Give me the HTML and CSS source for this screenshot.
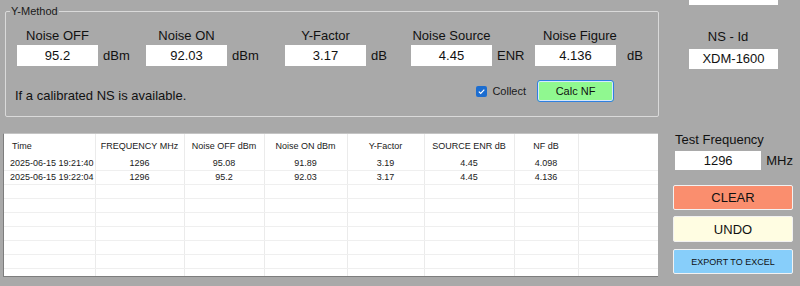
FILE: index.html
```html
<!DOCTYPE html>
<html lang="en">
<head>
  <meta charset="UTF-8" />
  <title>Noise Figure - Y-Method</title>
  <link rel="stylesheet" href="styles.css">
</head>
<body>
  <div class="window">
    <div class="top">
      <fieldset class="ymethod">
        <legend>Y-Method</legend>
        <div class="fields">
          <div class="field">
            <div class="field-col">
              <span class="field-label">Noise OFF</span>
              <div class="box">95.2</div>
            </div>
            <span class="unit">dBm</span>
          </div>
          <div class="field">
            <div class="field-col">
              <span class="field-label">Noise ON</span>
              <div class="box">92.03</div>
            </div>
            <span class="unit">dBm</span>
          </div>
          <div class="field">
            <div class="field-col">
              <span class="field-label">Y-Factor</span>
              <div class="box">3.17</div>
            </div>
            <span class="unit">dB</span>
          </div>
          <div class="field">
            <div class="field-col">
              <span class="field-label">Noise Source</span>
              <div class="box">4.45</div>
            </div>
            <span class="unit">ENR</span>
          </div>
          <div class="field field-nf">
            <div class="field-col">
              <span class="field-label">Noise Figure</span>
              <div class="box">4.136</div>
            </div>
            <span class="unit unit-wide">dB</span>
          </div>
        </div>
        <div class="actions">
          <span class="hint">If a calibrated NS is available.</span>
          <label class="collect">
            <span class="check">
              <svg width="11" height="11" viewBox="0 0 11 11"><path d="M2.8 5.6 L4.7 7.4 L8.3 3.6" fill="none" stroke="#fff" stroke-width="1.2"/></svg>
            </span>
            Collect
          </label>
          <button class="calc">Calc NF</button>
        </div>
      </fieldset>

      <div class="side-top">
        <div class="box name-box">Anritsu 2004</div>
        <div class="ns-label">NS - Id</div>
        <div class="box ns-box">XDM-1600</div>
      </div>
    </div>

    <div class="bottom">
      <div class="grid-wrap">
        <table class="grid">
          <colgroup>
            <col style="width:91px"><col style="width:89px"><col style="width:80px"><col style="width:83px">
            <col style="width:77px"><col style="width:90px"><col style="width:64px"><col>
          </colgroup>
          <thead>
            <tr>
              <th class="left">Time</th>
              <th>FREQUENCY MHz</th>
              <th>Noise OFF dBm</th>
              <th>Noise ON dBm</th>
              <th>Y-Factor</th>
              <th>SOURCE ENR dB</th>
              <th>NF dB</th>
              <th class="last"></th>
            </tr>
          </thead>
          <tbody>
            <tr><td class="left">2025-06-15 19:21:40</td><td>1296</td><td>95.08</td><td>91.89</td><td>3.19</td><td>4.45</td><td>4.098</td><td class="last"></td></tr>
            <tr><td class="left">2025-06-15 19:22:04</td><td>1296</td><td>95.2</td><td>92.03</td><td>3.17</td><td>4.45</td><td>4.136</td><td class="last"></td></tr>
            <tr><td></td><td></td><td></td><td></td><td></td><td></td><td></td><td class="last"></td></tr>
            <tr><td></td><td></td><td></td><td></td><td></td><td></td><td></td><td class="last"></td></tr>
            <tr><td></td><td></td><td></td><td></td><td></td><td></td><td></td><td class="last"></td></tr>
            <tr><td></td><td></td><td></td><td></td><td></td><td></td><td></td><td class="last"></td></tr>
            <tr><td></td><td></td><td></td><td></td><td></td><td></td><td></td><td class="last"></td></tr>
            <tr><td></td><td></td><td></td><td></td><td></td><td></td><td></td><td class="last"></td></tr>
            <tr><td></td><td></td><td></td><td></td><td></td><td></td><td></td><td class="last"></td></tr>
          </tbody>
        </table>
      </div>

      <div class="side-bottom">
        <div class="freq-label">Test Frequency</div>
        <div class="freq-row">
          <div class="box freq-box">1296</div>
          <span class="unit">MHz</span>
        </div>
        <button class="btn btn-clear">CLEAR</button>
        <button class="btn btn-undo">UNDO</button>
        <button class="btn btn-export">EXPORT TO EXCEL</button>
      </div>
    </div>
  </div>
</body>
</html>
```

FILE: styles.css
```css
* {
  margin: 0;
  padding: 0;
  box-sizing: border-box;
}

body {
  background: #a9a9a9;
  font-family: "Liberation Sans", Arial, sans-serif;
  color: #111;
}

.window {
  width: 800px;
  height: 286px;
  overflow: hidden;
}

/* top area: group box + NS id */
.top {
  display: flex;
  align-items: flex-start;
  height: 133px;
  padding: 4px 0 0 5px;
}

.ymethod {
  width: 654px;
  border: 1px solid #dadada;
  border-radius: 2px;
  padding: 10px 0 14px 0;
}

.ymethod legend {
  margin-left: 4px;
  padding: 0 1px;
  font-size: 11px;
  line-height: 14px;
  color: #1a1a1a;
}

.fields {
  display: grid;
  grid-template-columns: 129px 139px 126px 124px 1fr;
  margin-left: 11px;
}

.field {
  display: flex;
  align-items: flex-end;
}

.field-col {
  display: flex;
  flex-direction: column;
  width: 81px;
}

.field-label {
  font-size: 13px;
  line-height: 15px;
  text-align: center;
  margin-bottom: 2px;
  white-space: nowrap;
}

.field-nf {
  margin-top: -1px;
}

.field-nf .field-label {
  margin-left: 8px;
}

.box {
  background: #fff;
  font-size: 13px;
  text-align: center;
  color: #111;
  white-space: nowrap;
}

.field-col .box {
  height: 21px;
  line-height: 21px;
}

.unit {
  font-size: 13px;
  line-height: 21px;
  margin-left: 5px;
}

.unit-wide {
  margin-left: 11px;
}

.actions {
  display: flex;
  align-items: center;
  margin-top: 14px;
  height: 22px;
}

.hint {
  font-size: 13px;
  margin: 8px 0 0 9px;
}

.collect {
  display: flex;
  align-items: center;
  margin-left: auto;
  font-size: 11px;
  color: #1a1a1a;
}

.check {
  width: 11px;
  height: 11px;
  border-radius: 2px;
  background: #1c6dd0;
  margin-right: 5px;
  display: flex;
}

.calc {
  width: 77px;
  height: 22px;
  margin: 0 44px 0 11px;
  background: #90f890;
  border: 1px solid #2f80e0;
  border-radius: 3px;
  box-shadow: inset 0 0 0 1px #d6e8ff;
  font-family: "Liberation Sans", Arial, sans-serif;
  font-size: 11px;
  color: #111;
}

.side-top {
  width: 89px;
  margin-left: 30px;
  margin-top: -4px;
}

.name-box {
  height: 20px;
  line-height: 20px;
  margin-top: -15px;
}

.ns-label {
  font-size: 13px;
  line-height: 15px;
  text-align: center;
  padding-right: 11px;
  margin-top: 24px;
}

.ns-box {
  margin-top: 5px;
  height: 20px;
  line-height: 20px;
}

/* bottom area: data grid + buttons */
.bottom {
  display: flex;
  align-items: flex-start;
  padding-left: 3px;
}

.grid-wrap {
  width: 655px;
  height: 144px;
  background: #fff;
  border-left: 1px solid #7d7d7d;
  border-bottom: 1px solid #7d7d7d;
  border-top: 1px solid #c4c4c4;
  overflow: hidden;
}

.grid {
  width: 100%;
  table-layout: fixed;
  border-collapse: collapse;
  font-size: 9px;
  color: #1a1a1a;
}

.grid th {
  height: 22px;
  font-weight: normal;
  padding-top: 2px;
  text-align: center;
  border-right: 1px solid #ebebeb;
  white-space: nowrap;
}

.grid td {
  height: 14px;
  padding: 0;
  text-align: center;
  border-right: 1px solid #ebebeb;
  border-bottom: 1px solid #efefef;
  white-space: nowrap;
}

.grid th.left {
  text-align: left;
  padding-left: 8px;
}

.grid td.left {
  text-align: left;
  padding-left: 6px;
}

.grid .last {
  border-right: none;
}

.side-bottom {
  width: 120px;
  margin-left: 15px;
  display: flex;
  flex-direction: column;
}

.freq-label {
  font-size: 13px;
  line-height: 15px;
  margin: -1px 0 0 2px;
}

.freq-row {
  display: flex;
  align-items: center;
  margin: 4px 0 0 2px;
}

.freq-box {
  width: 89px;
  height: 19px;
  line-height: 19px;
}

.freq-row .unit {
  line-height: 19px;
}

.btn {
  width: 120px;
  height: 25px;
  border: 1px solid #f2f2f2;
  border-radius: 2px;
  font-family: "Liberation Sans", Arial, sans-serif;
  font-size: 13px;
  color: #111;
}

.btn-clear {
  margin-top: 15px;
  background: #fa8e6e;
}

.btn-undo {
  margin-top: 6px;
  height: 26px;
  background: #fffde2;
}

.btn-export {
  margin-top: 7px;
  background: #87cefa;
  font-size: 9px;
}
```
